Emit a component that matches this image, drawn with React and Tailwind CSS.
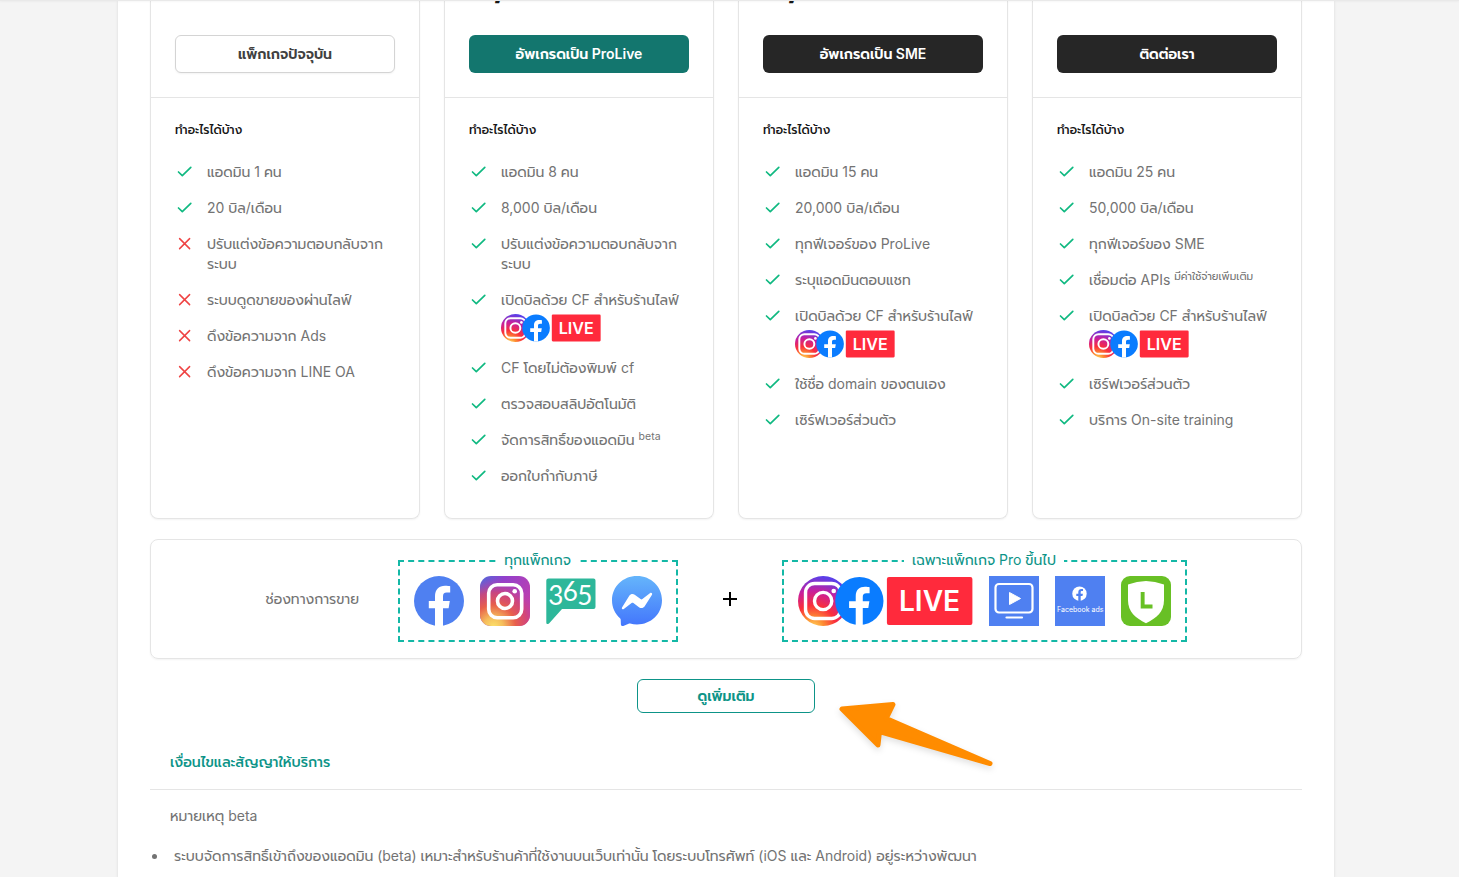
function Check() {
  return (
    <svg viewBox="0 0 20 20" className="h-5 w-5 shrink-0" fill="none" stroke="#10b981" strokeWidth="1.7" strokeLinecap="round" strokeLinejoin="round" aria-hidden="true">
      <path d="M3.5 10 L7.3 13.6 L15.8 5.3" />
    </svg>
  );
}

function Cross() {
  return (
    <svg viewBox="0 0 20 20" className="h-5 w-5 shrink-0" fill="none" stroke="#ef4444" strokeWidth="1.5" strokeLinecap="round" aria-hidden="true">
      <path d="M4.6 4.6 L14.6 14.6 M14.6 4.6 L4.6 14.6" />
    </svg>
  );
}

function LiveBadge({ id, className }) {
  return (
    <svg viewBox="0 0 174 50" preserveAspectRatio="none" className={className} role="img" aria-label="Instagram Facebook LIVE">
      <defs>
        <radialGradient id={id} cx="0.3" cy="1.05" r="1.1">
          <stop offset="0" stopColor="#ffdd62" />
          <stop offset="0.2" stopColor="#fd8d32" />
          <stop offset="0.42" stopColor="#fa2f3b" />
          <stop offset="0.68" stopColor="#c81f9c" />
          <stop offset="0.95" stopColor="#5b3fe8" />
        </radialGradient>
      </defs>
      <circle cx="25" cy="25" r="25" fill={`url(#${id})`} />
      <rect x="7.5" y="7.5" width="35" height="35" rx="9" fill="none" stroke="#fff" strokeWidth="3.4" />
      <circle cx="25" cy="25" r="8.6" fill="none" stroke="#fff" strokeWidth="3.4" />
      <circle cx="35.5" cy="15" r="2.3" fill="#fff" />
      <circle cx="61" cy="25" r="24" fill="#0a7cff" />
      <path d="M57.4 49 V32 H50.8 V25.3 H57.4 V20.2 C57.4 13.8 61.2 10.8 66.6 10.8 C68.8 10.8 70.2 11 71.2 11.2 V17.2 H68 C65.4 17.2 64.4 18.6 64.4 20.8 V25.3 H71 L69.9 32 H64.4 V49 Z" fill="#fff" />
      <rect x="88.400" y="1" width="85" height="48" rx="2" fill="#ff2a3c" />
      <text x="130.800" y="35" textAnchor="middle" fill="#fff" fontSize="28" fontWeight="600">LIVE</text>
    </svg>
  );
}

function FacebookIcon() {
  return (
    <svg viewBox="0 0 50 50" className="size-[50px]" role="img" aria-label="Facebook">
      <circle cx="25" cy="25" r="25" fill="#4f80f1" />
      <path d="M21 50 V32.3 H14.8 V25 H21 V20.4 C21 13.4 25 9.8 31 9.8 C33.4 9.8 35.2 10 36.2 10.2 V16.4 H32.8 C29.9 16.4 29 18 29 20.4 V25 H35.8 L34.6 32.3 H29 V50 Z" fill="#fff" />
    </svg>
  );
}

function InstagramIcon() {
  return (
    <svg viewBox="0 0 50 50" className="size-[50px]" role="img" aria-label="Instagram">
      <defs>
        <linearGradient id="ig-base" x1="0" y1="0" x2="1" y2="0.5">
          <stop offset="0" stopColor="#4f6bd8" />
          <stop offset="0.4" stopColor="#9140cc" />
          <stop offset="1" stopColor="#bd3fb0" />
        </linearGradient>
        <radialGradient id="ig-glow" cx="0.27" cy="1.02" r="0.98">
          <stop offset="0" stopColor="#fce26a" />
          <stop offset="0.2" stopColor="#f5bd5c" />
          <stop offset="0.45" stopColor="#e8604b" />
          <stop offset="0.7" stopColor="#d8466c" stopOpacity="0.8" />
          <stop offset="1" stopColor="#b83fb5" stopOpacity="0" />
        </radialGradient>
      </defs>
      <rect width="50" height="50" rx="11" fill="url(#ig-base)" />
      <rect width="50" height="50" rx="11" fill="url(#ig-glow)" />
      <rect x="8.7" y="8.7" width="33" height="33" rx="8.5" fill="none" stroke="#fff" strokeWidth="3.6" />
      <circle cx="25" cy="25" r="7.5" fill="none" stroke="#fff" strokeWidth="3.6" />
      <circle cx="34.7" cy="15.2" r="2.3" fill="#fff" />
    </svg>
  );
}

function Chat365Icon() {
  return (
    <svg viewBox="0 0 50 50" className="size-[50px]" role="img" aria-label="365">
      <path d="M2.5 2.5 H47.5 Q49.5 2.5 49.5 4.5 V31 Q49.5 33 47.5 33 H16 L3 47.5 Q0.3 49 0.3 46.5 V4.5 Q0.3 2.5 2.5 2.5 Z" fill="#2db79a" />
      <g fill="#fff" fontSize="26" textAnchor="middle" fontFamily="Lato, sans-serif">
        <text x="9.7" y="28.5">3</text>
        <text x="24.3" y="24.7">6</text>
        <text x="38.7" y="28.5">5</text>
      </g>
    </svg>
  );
}

function MessengerIcon() {
  return (
    <svg viewBox="0 0 50 50" className="size-[50px]" role="img" aria-label="Messenger">
      <defs>
        <linearGradient id="messenger" x1="0" y1="0" x2="0" y2="1">
          <stop offset="0" stopColor="#65b5fb" />
          <stop offset="1" stopColor="#4376fc" />
        </linearGradient>
      </defs>
      <path d="M25 0 C11 0 0 10.6 0 24.3 C0 31.6 3 37.8 8 42.2 C8.5 42.7 8.7 43.2 8.7 43.8 L8.9 48.5 C9 49.8 10.2 50.4 11.3 49.9 L16.6 47.7 C17.2 47.5 17.6 47.5 18.1 47.6 C20.3 48.2 22.6 48.5 25 48.5 C39 48.5 50 38 50 24.3 C50 10.6 39 0 25 0 Z" fill="url(#messenger)" />
      <path d="M10 31.4 L17.3 19.8 C18.5 18 21 17.5 22.7 18.8 L28.6 23.1 C29.1 23.5 29.8 23.5 30.4 23.1 L38.2 17.1 C39.3 16.3 40.7 17.6 40 18.8 L32.7 30.3 C31.5 32.2 29 32.7 27.3 31.4 L21.4 27.1 C20.9 26.7 20.2 26.7 19.6 27.1 L11.8 33.1 C10.7 33.9 9.3 32.6 10 31.4 Z" fill="#fff" />
    </svg>
  );
}

function ScreenIcon() {
  return (
    <svg viewBox="0 0 50 50" className="size-[50px]" role="img" aria-label="Live TV">
      <rect width="50" height="50" fill="#4f80f1" />
      <rect x="6.5" y="8" width="37" height="28.5" rx="3.5" fill="none" stroke="#fff" strokeWidth="2.2" />
      <path d="M20.5 16.5 V28.5 L31.5 22.5 Z" fill="#fff" stroke="#fff" strokeWidth="1" strokeLinejoin="round" />
      <path d="M17.5 41.5 H33" stroke="#fff" strokeWidth="2.2" strokeLinecap="round" />
    </svg>
  );
}

function FacebookAdsIcon() {
  return (
    <svg viewBox="0 0 50 50" className="size-[50px]" role="img" aria-label="Facebook ads">
      <rect width="50" height="50" fill="#4f80f1" />
      <circle cx="24.5" cy="17.7" r="7.2" fill="#fff" />
      <path d="M23.3 25 V20 H21.3 V17.7 H23.3 V16.2 C23.3 14 24.6 12.9 26.4 12.9 L28 13 V15 H26.9 C26 15 25.7 15.5 25.7 16.2 V17.7 H27.9 L27.5 20 H25.7 V25 Z" fill="#4f80f1" />
      <text x="25.2" y="35.5" textAnchor="middle" fill="#fff" fontSize="7">Facebook ads</text>
    </svg>
  );
}

function LineShieldIcon() {
  return (
    <svg viewBox="0 0 50 50" className="size-[50px]" role="img" aria-label="LINE OA">
      <rect width="50" height="50" rx="9" fill="#68c025" />
      <path d="M7 8.6 Q25 1.4 43 8.6 V24 C43 36 35.5 42 25 47.2 C14.5 42 7 36 7 24 Z" fill="#fff" />
      <path d="M19.7 16 H23.6 V28.6 H31.5 V32.4 H19.7 Z" fill="#68c025" />
    </svg>
  );
}

const plans = [
  {
    button: "แพ็กเกจปัจจุบัน",
    style: "border border-[#d4d4d4] bg-white text-[#404040] shadow-xs",
    items: [
      { text: "แอดมิน 1 คน" },
      { text: "20 บิล/เดือน" },
      { text: "ปรับแต่งข้อความตอบกลับจาก", second: "ระบบ", off: true },
      { text: "ระบบดูดขายของผ่านไลฟ์", off: true },
      { text: "ดึงข้อความจาก Ads", off: true },
      { text: "ดึงข้อความจาก LINE OA", off: true },
    ],
  },
  {
    button: "อัพเกรดเป็น ProLive",
    style: "bg-[#13766e] text-white",
    price: true,
    items: [
      { text: "แอดมิน 8 คน" },
      { text: "8,000 บิล/เดือน" },
      { text: "ปรับแต่งข้อความตอบกลับจาก", second: "ระบบ" },
      { text: "เปิดบิลด้วย CF สำหรับร้านไลฟ์", live: true },
      { text: "CF โดยไม่ต้องพิมพ์ cf" },
      { text: "ตรวจสอบสลิปอัตโนมัติ" },
      { text: "จัดการสิทธิ์ของแอดมิน", sup: "beta" },
      { text: "ออกใบกำกับภาษี" },
    ],
  },
  {
    button: "อัพเกรดเป็น SME",
    style: "bg-[#262626] text-white",
    price: true,
    items: [
      { text: "แอดมิน 15 คน" },
      { text: "20,000 บิล/เดือน" },
      { text: "ทุกฟีเจอร์ของ ProLive" },
      { text: "ระบุแอดมินตอบแชท" },
      { text: "เปิดบิลด้วย CF สำหรับร้านไลฟ์", live: true },
      { text: "ใช้ชื่อ domain ของตนเอง" },
      { text: "เซิร์ฟเวอร์ส่วนตัว" },
    ],
  },
  {
    button: "ติดต่อเรา",
    style: "bg-[#262626] text-white",
    items: [
      { text: "แอดมิน 25 คน" },
      { text: "50,000 บิล/เดือน" },
      { text: "ทุกฟีเจอร์ของ SME" },
      { text: "เชื่อมต่อ APIs", sup: "มีค่าใช้จ่ายเพิ่มเติม" },
      { text: "เปิดบิลด้วย CF สำหรับร้านไลฟ์", live: true },
      { text: "เซิร์ฟเวอร์ส่วนตัว" },
      { text: "บริการ On-site training" },
    ],
  },
];

function PlanCard({ plan, index }) {
  return (
    <section className="rounded-b-lg border border-t-0 border-[#e5e5e5] shadow-xs">
      <div className="border-b border-[#e5e5e5] px-6 pb-6">
        <div className="flex h-[35px] items-start overflow-hidden pl-6">
          {plan.price && <span className="-mt-[35px] text-4xl leading-9 font-extrabold text-[#171717]">,</span>}
        </div>
        <button type="button" className={`h-[38px] w-full rounded-md text-sm font-semibold ${plan.style}`}>
          {plan.button}
        </button>
      </div>
      <div className="px-6 pt-6 pb-8">
        <h3 className="text-xs font-medium text-[#171717]">ทำอะไรได้บ้าง</h3>
        <ul className="mt-6 flex flex-col gap-4">
          {plan.items.map((item) => (
            <li key={item.text} className="flex gap-3 text-sm text-[#737373]">
              {item.off ? <Cross /> : <Check />}
              <div className="whitespace-nowrap">
                {item.text}
                {item.sup && <> <sup>{item.sup}</sup></>}
                {item.second && <div>{item.second}</div>}
                {item.live && <LiveBadge id={`live-${index}`} className="mt-1 h-7 w-[100px]" />}
              </div>
            </li>
          ))}
        </ul>
      </div>
    </section>
  );
}

function ChannelBox({ title, children }) {
  return (
    <fieldset className="mt-2.5 mb-4 min-w-0 border-2 border-dashed border-[#14b8a6] px-3.5 pt-1 pb-3.5">
      <legend className="mx-auto px-2 pb-0.5 text-sm text-[#0d9488]">{title}</legend>
      <div className="flex items-center gap-4">{children}</div>
    </fieldset>
  );
}

export default function App() {
  return (
    <div className="relative min-h-screen bg-[#f4f4f4] pr-[7px] font-[Inter,Prompt,Kanit,'Noto_Sans_Thai',sans-serif]">
      <div className="absolute inset-x-0 top-0 z-10 h-px bg-[#e9e9e9] shadow-xs" />
      <main className="mx-auto min-h-screen max-w-[1216px] bg-white px-8 shadow-sm">
        <div className="grid grid-cols-4 gap-6">
          {plans.map((plan, i) => (
            <PlanCard key={plan.button} plan={plan} index={i} />
          ))}
        </div>

        <section className="mt-5 flex items-center justify-center gap-10 rounded-lg border border-[#e5e5e5] text-sm text-[#737373] shadow-xs">
          <h2 className="w-[92px] whitespace-nowrap">ช่องทางการขาย</h2>
          <ChannelBox title="ทุกแพ็กเกจ">
            <FacebookIcon />
            <InstagramIcon />
            <Chat365Icon />
            <MessengerIcon />
          </ChannelBox>
          <svg viewBox="0 0 24 24" className="size-6" stroke="#000" strokeWidth="2" aria-label="plus">
            <path d="M5 12 H19 M12 5 V19" />
          </svg>
          <ChannelBox title="เฉพาะแพ็กเกจ Pro ขึ้นไป">
            <LiveBadge id="live-all" className="h-[50px] w-[175px]" />
            <ScreenIcon />
            <FacebookAdsIcon />
            <LineShieldIcon />
          </ChannelBox>
        </section>

        <div className="relative mt-5 flex justify-center">
          <button type="button" className="h-[34px] w-[178px] rounded-md border border-[#0d9488] text-sm font-semibold text-[#0d9488]">
            ดูเพิ่มเติม
          </button>
          <svg viewBox="0 0 170 80" className="absolute top-[14px] left-1/2 ml-[106px] h-20 w-[170px] drop-shadow-md" aria-hidden="true">
            <path d="M10 16 L61 11.5 L54.2 25.5 L158 70.5 L47.5 38.5 L46 52 Z" fill="#ff8c00" stroke="#ff8c00" strokeWidth="5" strokeLinejoin="round" />
          </svg>
        </div>

        <div className="mt-[22px] border-b border-[#e5e5e5] px-5 py-[17px]">
          <a href="#terms" className="block text-sm font-medium text-[#0d9488]">เงื่อนไขและสัญญาให้บริการ</a>
        </div>
        <div className="pt-4 text-sm text-[#737373]">
          <p className="px-5">หมายเหตุ beta</p>
          <ul className="mt-5 flex flex-col gap-2">
            <li className="flex items-center gap-[17px]">
              <span className="ml-0.5 size-[5px] shrink-0 rounded-full bg-[#737373]" />
              <span>ระบบจัดการสิทธิ์เข้าถึงของแอดมิน (beta) เหมาะสำหรับร้านค้าที่ใช้งานบนเว็บเท่านั้น โดยระบบโทรศัพท์ (iOS และ Android) อยู่ระหว่างพัฒนา</span>
            </li>
          </ul>
        </div>
      </main>
    </div>
  );
}
